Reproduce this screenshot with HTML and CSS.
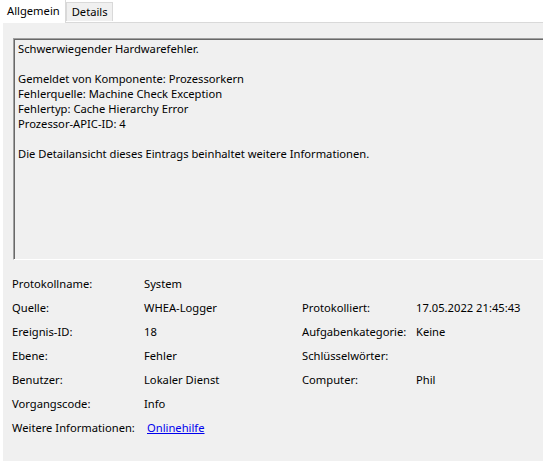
FILE: index.html
```html
<!DOCTYPE html>
<html lang="de">
<head>
<meta charset="utf-8">
<title>Ereignis</title>
<link rel="stylesheet" href="styles.css">
</head>
<body>
<div class="tabs">
  <div class="tab active">Allgemein</div>
  <div class="tab">Details</div>
</div>
<div class="panel">
  <div class="textbox">
    <p>Schwerwiegender Hardwarefehler.</p>
    <p>Gemeldet von Komponente: Prozessorkern<br>Fehlerquelle: Machine Check Exception<br>Fehlertyp: Cache Hierarchy Error<br>Prozessor-APIC-ID: 4</p>
    <p>Die Detailansicht dieses Eintrags beinhaltet weitere Informationen.</p>
  </div>
  <div class="grid">
    <div>Protokollname:</div><div>System</div><div></div><div></div>
    <div>Quelle:</div><div>WHEA-Logger</div><div>Protokolliert:</div><div>17.05.2022 21:45:43</div>
    <div>Ereignis-ID:</div><div>18</div><div>Aufgabenkategorie:</div><div>Keine</div>
    <div>Ebene:</div><div>Fehler</div><div>Schlüsselwörter:</div><div></div>
    <div>Benutzer:</div><div>Lokaler Dienst</div><div>Computer:</div><div>Phil</div>
    <div>Vorgangscode:</div><div>Info</div><div></div><div></div>
    <div>Weitere Informationen:</div><div><a class="link" href="#">Onlinehilfe</a></div><div></div><div></div>
  </div>
</div>
</body>
</html>
```
FILE: styles.css
```css
html, body {
  margin: 0;
  padding: 0;
  background: #ffffff;
  font-family: "Noto Sans", "DejaVu Sans", sans-serif;
  font-size: 11.2px;
  color: #000;
  width: 543px;
  height: 463px;
  overflow: hidden;
}
.tabs {
  display: flex;
  align-items: flex-end;
  height: 22px;
  position: relative;
  z-index: 1;
}
.tab {
  box-sizing: border-box;
  height: 19px;
  padding: 0 4px 0 5px;
  line-height: 18px;
  background: #f0f0f0;
  border: 1px solid #d9d9d9;
  border-bottom: none;
  margin-bottom: 1px;
}
.tab.active {
  height: 23px;
  margin-bottom: -1px;
  padding: 0 5px 0 7px;
  line-height: 21px;
  background: #ffffff;
  border: 1px solid #d9d9d9;
  border-bottom: none;
  border-top: none;
  border-left: none;
}
.panel {
  box-sizing: border-box;
  margin-left: 3px;
  height: 439px;
  background: #f0f0f0;
  border-top: 1px solid #d9d9d9;
  padding: 15px 0 0 10px;
}
.textbox {
  box-sizing: border-box;
  height: 222px;
  margin-right: -20px;
  border-style: solid;
  border-width: 1px;
  border-color: #a0a0a0 #ffffff #ffffff #a0a0a0;
  box-shadow: inset 1px 1px 0 #696969;
  padding: 2px 4px 0 4px;
  line-height: 15px;
}
.textbox p {
  margin: 0 0 15px 0;
}
.grid {
  display: grid;
  grid-template-columns: 132px 158px 114px 1fr;
  grid-auto-rows: 24px;
  margin: 11px 0 0 -1px;
  align-items: center;
  line-height: 15px;
}
.link {
  color: #0000ee;
  text-decoration: underline;
  margin-left: 3px;
}
```
